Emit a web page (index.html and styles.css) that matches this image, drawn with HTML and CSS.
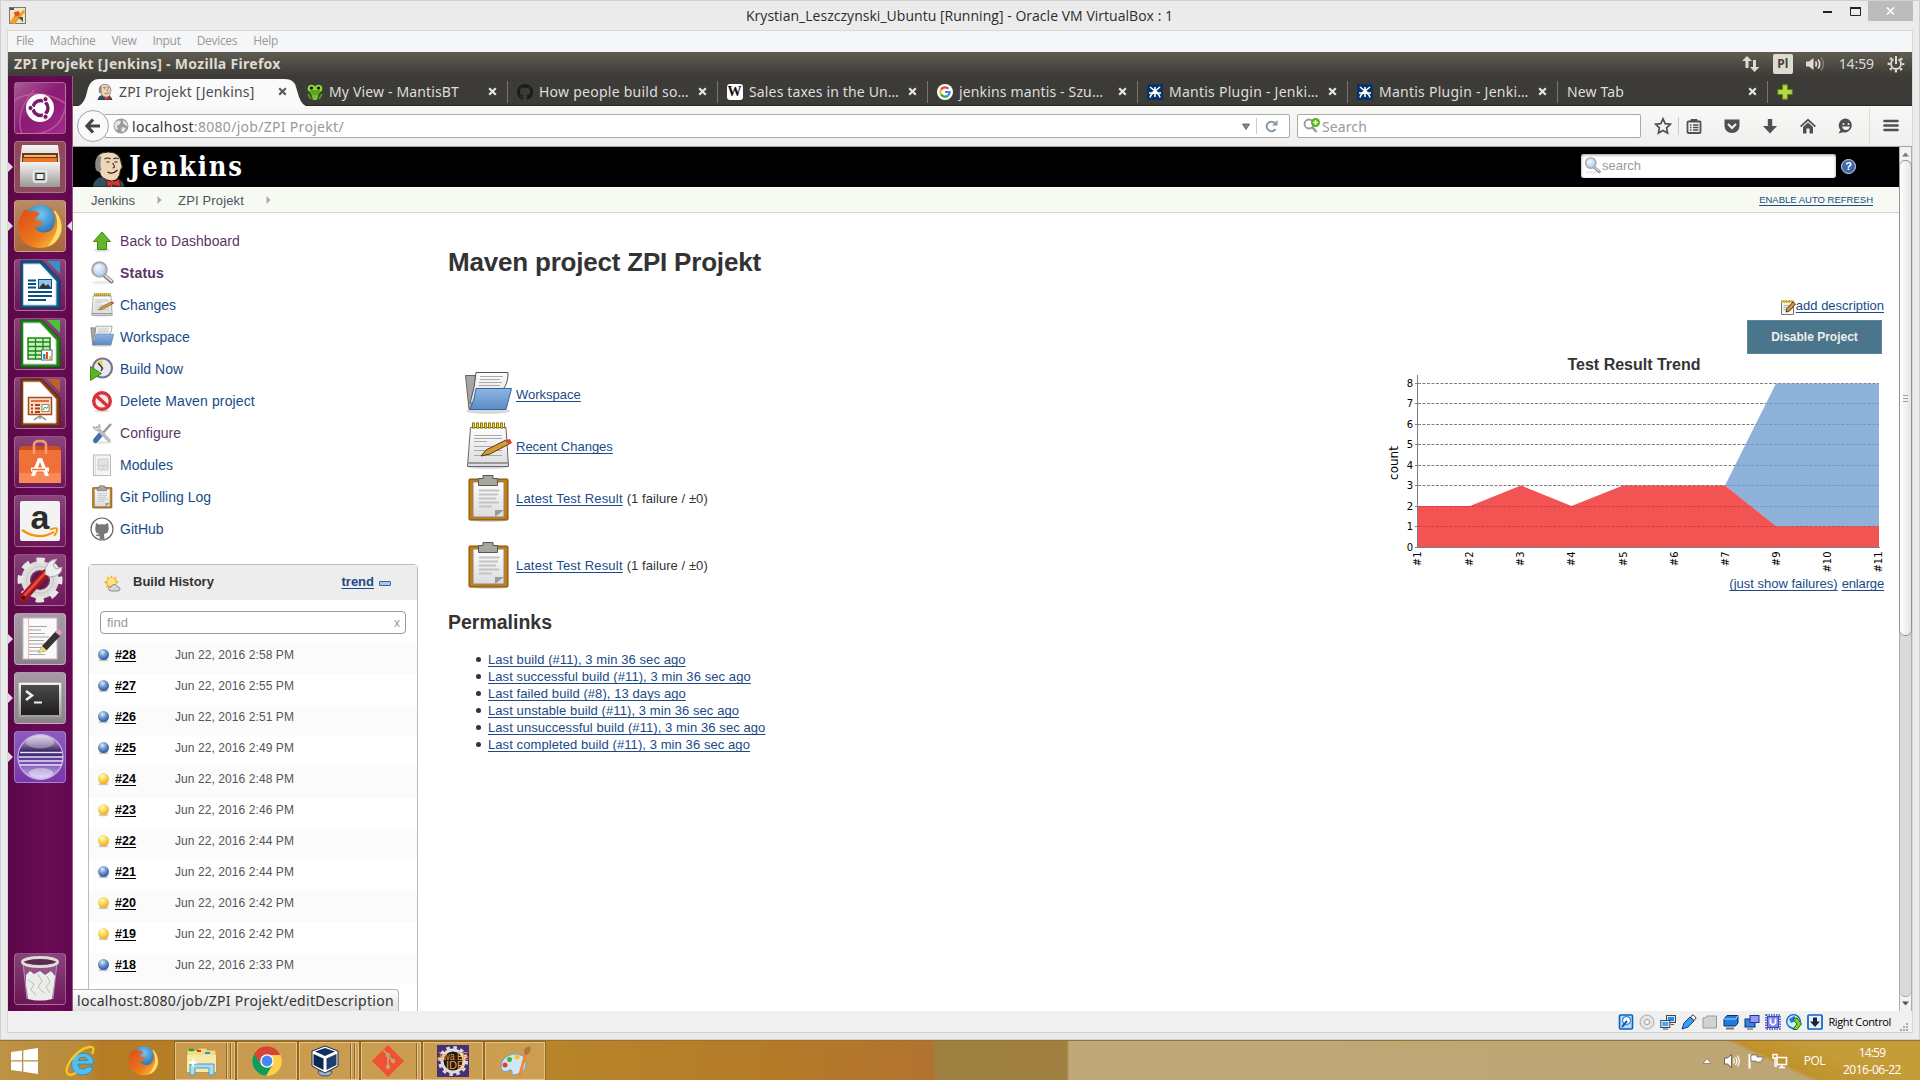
FILE: index.html
```html
<!DOCTYPE html>
<html lang="en">
<head>
<meta charset="utf-8">
<title>ZPI Projekt [Jenkins]</title>
<link rel="stylesheet" href="styles.css">
</head>
<body>
<svg class="defs" width="0" height="0">
  <defs>
    <linearGradient id="gPaper" x1="0" y1="0" x2="0" y2="1"><stop offset="0" stop-color="#fdfdfd"/><stop offset="1" stop-color="#dcdcdc"/></linearGradient>
    <linearGradient id="gSteel" x1="0" y1="0" x2="0" y2="1"><stop offset="0" stop-color="#f4f4f2"/><stop offset="1" stop-color="#9a9a98"/></linearGradient>
    <linearGradient id="gBlue" x1="0" y1="0" x2="0" y2="1"><stop offset="0" stop-color="#8fb5e0"/><stop offset="1" stop-color="#5a8cc8"/></linearGradient>
    <linearGradient id="gDark" x1="0" y1="0" x2="0" y2="1"><stop offset="0" stop-color="#4c4c4c"/><stop offset="1" stop-color="#1d1d1d"/></linearGradient>
    <linearGradient id="gFox" x1="0" y1="0" x2="1" y2="1"><stop offset="0" stop-color="#d9471c"/><stop offset=".6" stop-color="#ee7a1c"/><stop offset="1" stop-color="#fcd34a"/></linearGradient>
    <radialGradient id="gBallB" cx=".4" cy=".3" r=".75"><stop offset="0" stop-color="#e3eefa"/><stop offset=".45" stop-color="#6c98cd"/><stop offset="1" stop-color="#1f4f92"/></radialGradient>
    <radialGradient id="gBallY" cx=".4" cy=".3" r=".75"><stop offset="0" stop-color="#fffbd0"/><stop offset=".5" stop-color="#fbd74a"/><stop offset="1" stop-color="#f0a020"/></radialGradient>
    <linearGradient id="gEcl" x1="0" y1="0" x2="0" y2="1"><stop offset="0" stop-color="#d9cdea"/><stop offset=".2" stop-color="#8d78ad"/><stop offset=".38" stop-color="#33205c"/><stop offset=".6" stop-color="#6a47a4"/><stop offset="1" stop-color="#d6c2f3"/></linearGradient>
    <radialGradient id="gGlobe" cx=".5" cy=".25" r=".8"><stop offset="0" stop-color="#6fc7f2"/><stop offset="1" stop-color="#0b3f84"/></radialGradient>
    <radialGradient id="gLens" cx=".4" cy=".35" r=".7"><stop offset="0" stop-color="#f2f8ff"/><stop offset="1" stop-color="#a7c6ea"/></radialGradient>
    <symbol id="butler" viewBox="0 0 32 36">
      <path d="M0 36Q1 28 8 26L24 27Q31 29 32 36Z" fill="#335061" stroke="#111" stroke-width=".8"/>
      <path d="M11 26L19 36L23 27Z" fill="#fff"/>
      <path d="M3 14Q2 1 16 1Q28 1 29 13Q31 16 28 19Q27 30 19 30Q9 29 7 21Q2 20 3 14Z" fill="#f0d6b7" stroke="#222" stroke-width="1"/>
      <path d="M4 19Q1 12 5 6Q7 4 9 6Q7 12 9 19L7 21Z" fill="#8a8a84"/>
      <path d="M12 8Q15 6 18 8M21 8Q24 6 26 8M14 11h3M22 11h3M20 12Q24 17 20 17M15 21Q20 24 25 19" fill="none" stroke="#222" stroke-width="1.1"/>
      <path d="M14 29L20 31L27 28L28 36L21 34L15 36Z" fill="#d33833" stroke="#400" stroke-width=".6"/>
    </symbol>
    <symbol id="octo" viewBox="0 0 16 16"><path fill-rule="evenodd" d="M8 0C3.58 0 0 3.58 0 8c0 3.54 2.29 6.53 5.47 7.59.4.07.55-.17.55-.38 0-.19-.01-.82-.01-1.49-2.01.37-2.53-.49-2.69-.94-.09-.23-.48-.94-.82-1.13-.28-.15-.68-.52-.01-.53.63-.01 1.08.58 1.23.82.72 1.21 1.87.87 2.33.66.07-.52.28-.87.51-1.07-1.78-.2-3.64-.89-3.64-3.95 0-.87.31-1.59.82-2.15-.08-.2-.36-1.02.08-2.12 0 0 .67-.21 2.2.82.64-.18 1.32-.27 2-.27s1.36.09 2 .27c1.53-1.04 2.2-.82 2.2-.82.44 1.1.16 1.92.08 2.12.51.56.82 1.27.82 2.15 0 3.07-1.87 3.75-3.65 3.95.29.25.54.73.54 1.48 0 1.07-.01 1.93-.01 2.2 0 .21.15.46.55.38A8.01 8.01 0 0 0 16 8c0-4.42-3.58-8-8-8z"/></symbol>
    <symbol id="mantisplug" viewBox="0 0 16 16"><rect width="16" height="16" fill="#063467"/><g stroke="#fff" fill="none" stroke-width="1.6"><path d="M3 3L8 7L13 3M8 3V13M2 9H5L8 7L11 9H14M3 13.5Q4 9 8 9Q12 9 13 13.5"/></g></symbol>
    <symbol id="tabx" viewBox="0 0 9 9"><path d="M1.2 1.2L7.8 7.8M7.8 1.2L1.2 7.8" stroke="currentColor" stroke-width="2.2"/></symbol>
    <symbol id="magnify" viewBox="0 0 24 24"><ellipse cx="12" cy="21.5" rx="10" ry="1.8" fill="#000" opacity=".08"/><path d="M14.5 14.5L21.5 20.5" stroke="#777" stroke-width="4" stroke-linecap="round"/><path d="M15 14.5L21.5 20" stroke="#ddd" stroke-width="2" stroke-linecap="round"/><circle cx="9.5" cy="8.5" r="7.3" fill="url(#gLens)" stroke="#a5a8a8" stroke-width="2"/></symbol>
    <symbol id="folder" viewBox="0 0 48 48"><ellipse cx="24" cy="41" rx="22" ry="3" fill="#000" opacity=".15"/><path d="M1.500 5.500H11L14 39L5 39.500Z" fill="#a6a6a6" stroke="#666"/><path d="M12 2.500H44Q44 13 40 18L36 34L6 33Q11 17 12 2.500Z" fill="url(#gPaper)" stroke="#555"/><path d="M16 6.500H39M16 9.500H36M15 12.500H38M15 15.500H36" stroke="#aaa"/><path d="M12 18.500H47.500Q45 28 42 39.500H6Q11 29 12 18.500Z" fill="url(#gBlue)" stroke="#3465a4"/></symbol>
    <symbol id="notepad" viewBox="0 0 48 48"><ellipse cx="24" cy="45" rx="20" ry="2" fill="#000" opacity=".15"/><path d="M6.500 5.500H42L44.500 44.500H3.500Z" fill="url(#gPaper)" stroke="#666"/><path d="M4 41H44" stroke="#999" stroke-width="2"/><path d="M8 3.500H41" stroke="#8a7500" stroke-width="6" stroke-dasharray="3 1"/><path d="M9 3.500H41" stroke="#f0dc50" stroke-width="4" stroke-dasharray="1.200 2.800"/><path d="M10 13.500H38M10 16.500H38M10 19.500H23M10 24.500H37M10 28.500H38M10 33.500H38" stroke="#aaa"/><path d="M17 34L22 28L42 18L45 22L26 32Z" fill="#d39a3a" stroke="#5b3c08"/><path d="M42 18L46 17L48 21L45 22.500Z" fill="#e23b3b"/></symbol>
    <symbol id="clip" viewBox="0 0 48 48"><ellipse cx="25" cy="46" rx="18" ry="2" fill="#000" opacity=".15"/><rect x="5" y="5" width="39" height="41" rx="1" fill="#c17d11" stroke="#7c4d07"/><path d="M9 8H40V43H9Z" fill="url(#gPaper)" stroke="#888"/><path d="M15 16.500H35.500M15 20.500H34M15 24.500H32M15 28.500H35M15 32.500H28" stroke="#c3c3c3" stroke-width="1.800"/><path d="M31 43V36H40Z" fill="#9a9a9a"/><path d="M19 1.500H29V4.500H33.500V11.500H14.500V4.500H19Z" fill="#a5a79c" stroke="#555"/></symbol>
    <symbol id="ff" viewBox="0 0 48 48"><circle cx="25" cy="22" r="20" fill="url(#gGlobe)"/><path d="M5 12Q8 4 13 9Q20 7 24 12Q19 14 19 18Q28 18 26 22Q22 26 18 25Q23 33 33 30Q40 27 40 16Q38 8 33 4Q46 10 47 25Q45 46 24 47Q3 46 1 26Q1 17 5 12Z" fill="url(#gFox)"/><path d="M40 8Q48 18 46 30Q42 42 32 45Q42 34 42 22Q42 14 38 8Z" fill="#fde06a"/></symbol>
    <symbol id="gear" viewBox="-24 -24 48 48"><circle r="15" fill="none" stroke="#dcdcda" stroke-width="9"/><circle r="20.500" fill="none" stroke="#e6e6e4" stroke-width="6" stroke-dasharray="8.500 7.600" stroke-dashoffset="4.250"/><circle r="14" fill="none" stroke="#c4c4c2" stroke-width="1"/><circle r="9" fill="#5c1a4c"/></symbol>
    <symbol id="ballB" viewBox="0 0 14 14"><ellipse cx="7" cy="12.500" rx="5.500" ry="1.300" fill="#000" opacity=".2"/><circle cx="7" cy="6.500" r="5.900" fill="url(#gBallB)"/></symbol>
    <symbol id="ballY" viewBox="0 0 14 14"><ellipse cx="7" cy="12.500" rx="5.500" ry="1.300" fill="#000" opacity=".2"/><circle cx="7" cy="6.500" r="5.900" fill="url(#gBallY)"/></symbol>
  </defs>
</svg>

<div class="window">
  <header class="titlebar">
    <svg class="vm-icon" viewBox="0 0 17 17"><rect x=".5" y=".5" width="16" height="16" fill="#f6e4c0" stroke="#777"/><path d="M0 16L5 9L9 8L14 3L17 4L10 12L6 17Z" fill="#f0a030"/><path d="M1 1h4v2h-4zM9 10l5 0v5z" fill="#555"/><path d="M5 5l5-1 1 4-5 2z" fill="#e5501e"/></svg>
    <span class="wtitle">Krystian_Leszczynski_Ubuntu [Running] - Oracle VM VirtualBox : 1</span>
    <div class="wbtns">
      <svg width="9" height="3"><rect width="9" height="2" y="1" fill="#222"/></svg>
      <svg width="11" height="9"><path d="M.5 1H10.500V8.500H.5Z" fill="none" stroke="#222"/><path d="M0 1H11" stroke="#222" stroke-width="2"/></svg>
      <span class="wclose"><svg width="9" height="8"><path d="M1 .5L8 7.500M8 .5L1 7.500" stroke="#fff" stroke-width="1.500"/></svg></span>
    </div>
  </header>
  <div class="client">
    <nav class="menubar"><span>File</span><span>Machine</span><span>View</span><span>Input</span><span>Devices</span><span>Help</span></nav>

    <div class="guest">
      <div class="panel">
        <span class="ptitle">ZPI Projekt [Jenkins] - Mozilla Firefox</span>
        <div class="indicators">
          <svg width="18" height="18" fill="#dfdbd2"><path d="M5 1L10 6H6.500V13H3.500V6H0ZM12.500 17L17.500 12H14V5H11V12H8Z"/></svg>
          <span class="kbd">Pl</span>
          <svg width="20" height="16" fill="none" stroke="#dfdbd2"><path d="M0 5.500H3L7.500 2V14L3 10.500H0Z" fill="#dfdbd2" stroke="none"/><path d="M9.500 5.500Q11.500 8 9.500 10.500M12 3.500Q15.500 8 12 12.500" stroke-width="1.700"/><path d="M15 1.500Q20 8 15 14.500" stroke="#858178" stroke-width="1.500"/></svg>
          <span class="clock">14:59</span>
          <svg width="18" height="18" viewBox="-9 -9 18 18"><circle r="5" fill="none" stroke="#dfdbd2" stroke-width="1.800"/><circle r="7.200" fill="none" stroke="#dfdbd2" stroke-width="2.400" stroke-dasharray="2.400 3.250" stroke-dashoffset="1.200"/><path d="M0 -9V1" stroke="#4b4943" stroke-width="4.500"/><path d="M0 -8V0" stroke="#dfdbd2" stroke-width="2"/></svg>
        </div>
      </div>

      <div class="desk">
        <aside class="launcher">
          <div class="tile t-dash"><svg viewBox="0 0 52 52"><path d="M0 18Q26 4 52 22M8 52Q0 30 20 8M22 52Q50 48 52 20" stroke="#d06bb4" stroke-width="1.500" fill="none" opacity=".6"/><circle cx="26" cy="26" r="14" fill="#fff"/><circle cx="26.500" cy="26" r="7.500" fill="none" stroke="#7c1a63" stroke-width="3.400"/><path d="M26.500 26L14 26M26.500 26L33 15M26.500 26L33 37" stroke="#fff" stroke-width="2"/><g fill="#7c1a63" stroke="#fff" stroke-width="1"><circle cx="16.500" cy="26" r="2.600"/><circle cx="31.500" cy="17.200" r="2.600"/><circle cx="31.500" cy="34.800" r="2.600"/></g></svg></div>
          <div class="tile t-files run"><svg viewBox="0 0 52 52"><path d="M8 4H44L46 20V46H6V20Z" fill="url(#gSteel)"/><path d="M8 12H44V22H8Z" fill="#6b3a16"/><path d="M10 14H42V16H10Z" fill="#fbb36b"/><path d="M9 17H43V22H9Z" fill="#ee7423"/><path d="M6 21H46V46H6Z" fill="url(#gSteel)"/><rect x="19.500" y="30" width="13" height="11" rx="2" fill="#bbb" stroke="#eee" stroke-width="1.500"/><rect x="22" y="32.500" width="8" height="6" fill="#eee" stroke="#222"/></svg></div>
          <div class="tile t-ff run focus"><svg viewBox="0 0 52 52"><use href="#ff" x="3" y="3" width="46" height="46"/></svg></div>
          <div class="tile"><svg viewBox="0 0 52 52"><path d="M7 2H28L46 21V49H7Z" fill="#0d5a8c" stroke="#07395c"/><path d="M33 2H46V15Z" fill="#3b8fc4"/><path d="M9.500 5H26L42 22V46H9.500Z" fill="#fff" stroke="#ccc"/><path d="M14 21.500H22M14 25H22M14 28.500H22M14 33H38M14 37H38M14 41H32" stroke="#0d4f7e" stroke-width="2"/><rect x="24.500" y="20.500" width="13" height="9" fill="#8cc8ec" stroke="#0d4f7e"/><path d="M25 29L29 24L32 27L34 25L37 29Z" fill="#333"/></svg></div>
          <div class="tile"><svg viewBox="0 0 52 52"><path d="M7 2H28L46 21V49H7Z" fill="#1a8a12" stroke="#0c5a08"/><path d="M33 2H46V15Z" fill="#4cc141"/><path d="M9.500 5H26L42 22V46H9.500Z" fill="#fff" stroke="#ccc"/><path d="M14 20H36V41H14Z" fill="#c9f2c2" stroke="#1a8a12" stroke-width="1.500"/><path d="M14 24H36M14 28.500H36M14 33H36M14 37H36M21.500 20V41M29 20V41" stroke="#1a8a12" stroke-width="1.300"/><rect x="27.500" y="32" width="10.500" height="10" fill="#fff" stroke="#666"/><path d="M29 41V36h2.500v5" fill="#2c8fe0"/><path d="M32 41V34h2v7" fill="#e2561d"/><path d="M35 41v-3h2v3" fill="#f2b72a"/></svg></div>
          <div class="tile"><svg viewBox="0 0 52 52"><path d="M7 2H28L46 21V49H7Z" fill="#8a3a0e" stroke="#552106"/><path d="M33 2H46V15Z" fill="#b9622d"/><path d="M9.500 5H26L42 22V46H9.500Z" fill="#fff" stroke="#ccc"/><rect x="14.500" y="20.500" width="23" height="17" fill="#fbdcc6" stroke="#a8481a" stroke-width="1.500"/><path d="M17 24H35" stroke="#e2703a" stroke-width="2"/><path d="M17 28H19M21 28H26M17 31.500H19M21 31.500H26M17 35H19M21 35H26" stroke="#a8481a" stroke-width="1.800"/><rect x="28" y="27.500" width="7" height="7" fill="#fff" stroke="#888"/><path d="M29 33l2-3 1.500 1.500 2-2.500" stroke="#2aa22a" fill="none"/><path d="M26 38V42M26 38.500L20 43M26 38.500L32 43" stroke="#888" stroke-width="1.500"/></svg></div>
          <div class="tile"><svg viewBox="0 0 52 52"><path d="M7 10H45L47 14H5Z" fill="#c9501c"/><path d="M5 14H47V47H5Z" fill="#f07137"/><path d="M5 37H47V47H5Z" fill="#f78a55"/><path d="M20 18V9Q20 5 26 5Q32 5 32 9V18" fill="none" stroke="#f49c72" stroke-width="2.500"/><path d="M17 40L24 22H28L35 40H31L26 26L21 40Z" fill="#fff"/><path d="M17 33.500H35" stroke="#fff" stroke-width="4"/><path d="M18 33.500H31" stroke="#f07137" stroke-width="1.500"/></svg></div>
          <div class="tile"><svg viewBox="0 0 52 52"><rect x="6" y="6" width="40" height="40" rx="2" fill="#f3f3f3"/><text x="16.500" y="33.500" class="amz">a</text><path d="M8 35Q24 46 40 37" fill="none" stroke="#f79400" stroke-width="2.200"/><path d="M36 34.500Q43 32 43 34Q43 38 40 41" fill="none" stroke="#f79400" stroke-width="1.700"/></svg></div>
          <div class="tile"><svg viewBox="0 0 52 52"><use href="#gear" x="3" y="3" width="46" height="46"/><path d="M9 44L32 19" stroke="#a31318" stroke-width="8" stroke-linecap="round"/><path d="M10 42L32 18" stroke="#e04a4a" stroke-width="3" stroke-linecap="round"/><circle cx="9.500" cy="43.500" r="2" fill="#5b0a0a"/><path d="M31 20Q31 6 43 5L39 11L42 15L48 13Q48 22 36 23Z" fill="#eee" stroke="#aaa"/></svg></div>
          <div class="tile t-gray run"><svg viewBox="0 0 52 52"><rect x="9" y="5" width="34" height="41" fill="#fafafa" stroke="#bbb"/><path d="M14.500 5V46" stroke="#f2a0a0" stroke-width=".8"/><path d="M15 13.500H33M15 17H27M15 20.500H31M15 24H35M15 27.500H30M15 31H31M15 34.500H29M15 38H27M15 41.500H31" stroke="#9a9a9a" stroke-width=".9"/><path d="M24 40L28 33L42 18L47 22L32 38Z" fill="#333"/><path d="M24 40L28 33L33 37.500Z" fill="#f2dc6a"/><path d="M41 19L44 16Q48 17 48 20L46 23Z" fill="#e89ac4"/></svg></div>
          <div class="tile t-gray run"><svg viewBox="0 0 52 52"><rect x="4" y="10" width="44" height="36" rx="1" fill="url(#gSteel)" stroke="#888"/><rect x="7" y="13" width="38" height="30" fill="url(#gDark)"/><path d="M12 19L18 23.500L12 28" fill="none" stroke="#eee" stroke-width="2.500"/><path d="M20 30.500H28" stroke="#eee" stroke-width="2"/></svg></div>
          <div class="tile t-ecl run"><svg viewBox="0 0 52 52"><circle cx="26.500" cy="26" r="22.500" fill="url(#gEcl)" stroke="#cbb5ea" stroke-width="1.200"/><path d="M6 21.500H48M5 26H49M5 30H49M6 34H48" stroke="#e9defa" stroke-width="1.600"/><ellipse cx="26" cy="11" rx="14" ry="6.500" fill="#fff" opacity=".3"/><ellipse cx="27" cy="42" rx="12" ry="5" fill="#fff" opacity=".4"/></svg></div>
          <div class="tile trash"><svg viewBox="0 0 52 52"><path d="M9 10L13 46Q26 50 39 46L43 10Z" fill="#fff" opacity=".14"/><path d="M9 10L13 46M43 10L39 46" stroke="#d9c8d6" opacity=".6"/><path d="M12 22L16 18L20 21L26 18L31 22L37 18L41 23L40 32L38 46Q26 49 14 46L12 32Z" fill="#ececea"/><path d="M14 27L20 31L17 37L22 42M24 21L28 28L24 34L30 40M33 23L36 29L32 34L36 40" stroke="#bbb" fill="none"/><ellipse cx="26" cy="9" rx="17.500" ry="4.500" fill="#5a2b50" stroke="#dcdcda" stroke-width="3"/></svg></div>
        </aside>

        <section class="browser">
          <div class="tabs">
            <div class="tab active">
              <svg class="curve" width="234" height="28" viewBox="0 0 234 28"><path d="M0 28Q8 27 11 17L13 9Q16 0 24 0H210Q219 0 221 8L224 18Q227 27 234 28Z" fill="#fafafa"/></svg>
              <svg class="fav"><use href="#butler"/></svg><span>ZPI Projekt [Jenkins]</span><svg class="x"><use href="#tabx"/></svg></div>
            <div class="tab first"><svg class="fav" viewBox="0 0 16 16"><path d="M4 9Q8 12 12 9L10 16H6Z" fill="#7ac234"/><circle cx="4.500" cy="4.500" r="3.800" fill="#8fd43a"/><circle cx="11.500" cy="4.500" r="3.800" fill="#8fd43a"/><path d="M3 9Q8 14 13 9V6H3Z" fill="#5fa81e"/><circle cx="4.500" cy="4" r="1.600" fill="#111"/><circle cx="11.500" cy="4" r="1.600" fill="#111"/><path d="M1 10L4 15M15 10L12 15" stroke="#4c9a14" stroke-width="2"/></svg><span>My View - MantisBT</span><svg class="x"><use href="#tabx"/></svg></div>
            <div class="tab wide"><svg class="fav" fill="#1b1b1a"><use href="#octo"/></svg><span>How people build so…</span><svg class="x"><use href="#tabx"/></svg></div>
            <div class="tab"><span class="fav wiki">W</span><span>Sales taxes in the Un…</span><svg class="x"><use href="#tabx"/></svg></div>
            <div class="tab"><svg class="fav" viewBox="0 0 16 16"><circle cx="8" cy="8" r="8" fill="#fff"/><g fill="none" stroke-width="2.200"><path d="M11.500 4.800A4.700 4.700 0 0 0 4 5.600" stroke="#ea4335"/><path d="M4 5.600A4.700 4.700 0 0 0 4 10.400" stroke="#fbbc05"/><path d="M4 10.400A4.700 4.700 0 0 0 11 11.600" stroke="#34a853"/><path d="M11 11.600A4.700 4.700 0 0 0 12.700 8H8" stroke="#4285f4"/></g></svg><span>jenkins mantis - Szu…</span><svg class="x"><use href="#tabx"/></svg></div>
            <div class="tab wide"><svg class="fav"><use href="#mantisplug"/></svg><span>Mantis Plugin - Jenki…</span><svg class="x"><use href="#tabx"/></svg></div>
            <div class="tab wide"><svg class="fav"><use href="#mantisplug"/></svg><span>Mantis Plugin - Jenki…</span><svg class="x"><use href="#tabx"/></svg></div>
            <div class="tab"><span>New Tab</span><svg class="x"><use href="#tabx"/></svg></div>
            <div class="newtab"><svg width="16" height="16"><path d="M5.500 .8H10.500V5.500H15.200V10.500H10.500V15.200H5.500V10.500H.8V5.500H5.500Z" fill="#b4d943" stroke="#5e8a12"/></svg></div>
          </div>

          <div class="navbar">
            <span class="back"><svg width="16" height="16"><path d="M8 1.500L2 8L8 14.500M2.500 8H15" fill="none" stroke="#444" stroke-width="3.200"/></svg></span>
            <div class="urlbar">
              <svg width="16" height="16" viewBox="0 0 16 16"><circle cx="8" cy="8" r="7.500" fill="#9a9a9a"/><path d="M2 5Q5 1.500 8 3L7 6L4 8L5 11L3 12Q.5 9 2 5ZM10 2Q14 4 15 8L12 7L10 5ZM9 9L13 10L11 14L8 13Z" fill="#e4e4e4"/></svg>
              <span class="url"><b>localhost</b>:8080/job/ZPI Projekt/</span>
              <svg class="dd" width="8" height="7"><path d="M.5 1H7.500L4 6.500Z" fill="#888" stroke="#555" stroke-width=".8"/></svg>
              <i></i>
              <svg class="reload" width="13" height="13" viewBox="0 0 13 13"><path d="M10.500 9A4.800 4.800 0 1 1 9.800 3" fill="none" stroke="#8996a1" stroke-width="2"/><path d="M7 5.500H12.500V0Z" fill="#8996a1"/></svg>
            </div>
            <div class="searchbar">
              <svg width="17" height="16" viewBox="0 0 17 16"><circle cx="6" cy="6" r="4.500" fill="none" stroke="#999" stroke-width="1.800"/><path d="M9 9L13.500 14" stroke="#999" stroke-width="2.600"/><circle cx="12.500" cy="4.500" r="4.500" fill="#54b71b"/><path d="M12.500 2V7M10 4.500H15" stroke="#fff" stroke-width="1.400"/></svg>
              <span>Search</span>
            </div>
            <div class="tools">
              <svg viewBox="0 0 18 18"><path d="M9 1.800L11.200 6.600L16.400 7.200L12.600 10.800L13.600 16L9 13.400L4.400 16L5.400 10.800L1.600 7.200L6.800 6.600Z" fill="none" stroke="#505050" stroke-width="1.700"/></svg>
              <i></i>
              <svg viewBox="0 0 18 18"><rect x="2.500" y="4.500" width="13" height="11.500" rx="1" fill="none" stroke="#505050" stroke-width="1.800"/><path d="M6 4V2.500H12V4" fill="#505050" stroke="#505050"/><path d="M5 8H6.500M8 8H13.500M5 10.500H6.500M8 10.500H13.500M5 13H6.500M8 13H13.500" stroke="#505050" stroke-width="1.300"/></svg>
              <svg viewBox="0 0 18 18"><path d="M1.500 2.500H16.500V9Q16 15.500 9 16Q2 15.500 1.500 9Z" fill="#505050"/><path d="M5 7L9 11L13 7" fill="none" stroke="#f4f4f4" stroke-width="2"/></svg>
              <svg viewBox="0 0 18 18"><path d="M6.800 2H11.200V9H16L9 16.500L2 9H6.800Z" fill="#505050"/></svg>
              <svg viewBox="0 0 18 18"><path d="M9 1.500L17 9L15.800 10.200L9 4L2.200 10.200L1 9Z" fill="#505050"/><path d="M4 10L9 5.500L14 10V16.500H10.500V11.500H7.500V16.500H4Z" fill="#505050"/></svg>
              <svg viewBox="0 0 18 18"><path d="M9 1.500A7.300 7 0 1 1 6 15.300L1.500 16.500L3.500 13A7.300 7 0 0 1 9 1.500Z" fill="#505050"/><circle cx="6.500" cy="7" r="1" fill="#f4f4f4"/><circle cx="11.500" cy="7" r="1" fill="#f4f4f4"/><path d="M5 9.500H13Q12 13 9 13Q6 13 5 9.500Z" fill="#f4f4f4"/></svg>
              <i class="tall"></i>
              <svg viewBox="0 0 18 18"><path d="M2.500 4H15.500M2.500 8.500H15.500M2.500 13H15.500" stroke="#505050" stroke-width="2.600" stroke-linecap="round"/></svg>
            </div>
          </div>

          <div class="viewport">
            <div class="page">
              <header class="jhead">
                <svg class="jface"><use href="#butler"/></svg><span class="jname">Jenkins</span>
                <div class="jsearch"><svg width="17" height="17"><use href="#magnify"/></svg><span>search</span></div>
                <span class="help">?</span>
              </header>
              <div class="crumbs"><span>Jenkins</span><svg width="5" height="8"><path d="M.5 0L4.500 4L.5 8Z" fill="#aaa"/></svg><span class="c2">ZPI Projekt</span><svg width="5" height="8"><path d="M.5 0L4.500 4L.5 8Z" fill="#aaa"/></svg><a class="refresh">ENABLE AUTO REFRESH</a></div>

              <div class="columns">
                <aside class="side">
                  <ul class="tasks">
                    <li class="v"><svg viewBox="0 0 24 24"><ellipse cx="12" cy="21" rx="8" ry="2" fill="#000" opacity=".12"/><path d="M12 3L20.500 12.500H16.500V20.500H7.500V12.500H3.500Z" fill="#62b82a" stroke="#3c8a0c"/></svg><span>Back to Dashboard</span></li>
                    <li class="v cur"><svg><use href="#magnify"/></svg><span>Status</span></li>
                    <li><svg><use href="#notepad"/></svg><span>Changes</span></li>
                    <li><svg><use href="#folder"/></svg><span>Workspace</span></li>
                    <li><svg viewBox="0 0 24 24"><circle cx="12.500" cy="11" r="9.500" fill="#e9e9ec" stroke="#75758f" stroke-width="2.200"/><path d="M12.500 11L7 4.500L12.500 3Z" fill="#e7cf5a"/><path d="M8 6L12.500 11L11 14" fill="none" stroke="#333" stroke-width="1.500"/><path d="M.5 9.500L11.500 16.500L.5 23.500Z" fill="#5cb424" stroke="#2c7a06" stroke-width=".8"/></svg><span>Build Now</span></li>
                    <li class="del"><svg viewBox="0 0 24 24"><ellipse cx="12" cy="22" rx="8" ry="1.500" fill="#000" opacity=".12"/><circle cx="12" cy="12" r="8.300" fill="#f7e9e9" stroke="#d8333a" stroke-width="3.400"/><path d="M6 6.500L18 17.500" stroke="#d8333a" stroke-width="3.400"/></svg><span>Delete Maven project</span></li>
                    <li class="v"><svg viewBox="0 0 24 24"><ellipse cx="12" cy="21.500" rx="10" ry="1.500" fill="#000" opacity=".1"/><path d="M21 3L12 13" stroke="#8f9aa8" stroke-width="2.500"/><path d="M11.500 12.500L5.500 19.500" stroke="#3f6fb0" stroke-width="5" stroke-linecap="round"/><path d="M7 7L19 19.500" stroke="#bdbdbd" stroke-width="3.600" stroke-linecap="round"/><path d="M3 5Q4 10 8.500 9.500Q11.500 7 9.500 3L7.500 6.500L4.500 6.500Z" fill="#d8d8d8" stroke="#999" stroke-width=".7"/></svg><span>Configure</span></li>
                    <li><svg viewBox="0 0 24 24"><rect x="3.500" y="2" width="17" height="20.500" fill="#f5f5f5" stroke="#bbb"/><path d="M8 6H18V17H8ZM8 12.500H18M13 12.500V17" fill="#e2e2e2" stroke="#ccc"/><path d="M5.500 2V22" stroke="#ddd"/></svg><span>Modules</span></li>
                    <li><svg><use href="#clip"/></svg><span>Git Polling Log</span></li>
                    <li><svg viewBox="0 0 24 24"><circle cx="12" cy="12" r="11" fill="#fff" stroke="#666" stroke-width="1.200"/><path d="M6 6L9 7.500Q12 7 15 7.500L18 6L18.500 9.500Q20 16 14 17L14.500 22Q12 23 9.500 22L9.800 19Q6 20 5.500 17Q8 18 9.500 17Q4 16 5.500 9.500Z" fill="#777"/></svg><span>GitHub</span></li>
                  </ul>
                  <div class="history">
                    <div class="hhead"><svg width="17" height="17" viewBox="0 0 17 17"><path d="M7.500 0L9 3L12.500 1.500L12 5L15 7L12 9L10 14L5 12L1.500 13L3 9.500L0 7L3.500 5L2.500 1.500L6 3Z" fill="#f8b62a"/><circle cx="7.500" cy="7" r="4" fill="#fde48a"/><path d="M7 16Q4.500 16 4.500 13.500Q5 11.500 7 12Q8 9 11 9.500Q13 10 13.500 12Q16 12 16 14Q16 16 14 16Z" fill="#d5d5d5" stroke="#777" stroke-width=".8"/></svg><b>Build History</b><a>trend</a><i></i></div>
                    <div class="find"><span>find</span><span class="fx">x</span></div>
                    <ul class="builds">
                      <li><svg><use href="#ballB"/></svg><a>#28</a><span>Jun 22, 2016 2:58 PM</span></li>
                      <li><svg><use href="#ballB"/></svg><a>#27</a><span>Jun 22, 2016 2:55 PM</span></li>
                      <li><svg><use href="#ballB"/></svg><a>#26</a><span>Jun 22, 2016 2:51 PM</span></li>
                      <li><svg><use href="#ballB"/></svg><a>#25</a><span>Jun 22, 2016 2:49 PM</span></li>
                      <li><svg><use href="#ballY"/></svg><a>#24</a><span>Jun 22, 2016 2:48 PM</span></li>
                      <li><svg><use href="#ballY"/></svg><a>#23</a><span>Jun 22, 2016 2:46 PM</span></li>
                      <li><svg><use href="#ballY"/></svg><a>#22</a><span>Jun 22, 2016 2:44 PM</span></li>
                      <li><svg><use href="#ballB"/></svg><a>#21</a><span>Jun 22, 2016 2:44 PM</span></li>
                      <li><svg><use href="#ballY"/></svg><a>#20</a><span>Jun 22, 2016 2:42 PM</span></li>
                      <li><svg><use href="#ballY"/></svg><a>#19</a><span>Jun 22, 2016 2:42 PM</span></li>
                      <li><svg><use href="#ballB"/></svg><a>#18</a><span>Jun 22, 2016 2:33 PM</span></li>
                      <li></li>
                    </ul>
                  </div>
                </aside>

                <main class="main">
                  <h1>Maven project ZPI Projekt</h1>
                  <div class="split">
                    <div class="left">
                      <div class="prow"><svg><use href="#folder"/></svg><a>Workspace</a></div>
                      <div class="prow"><svg><use href="#notepad"/></svg><a>Recent Changes</a></div>
                      <div class="prow test"><svg><use href="#clip"/></svg><a>Latest Test Result</a><span>(1 failure / ±0)</span></div>
                      <div class="prow test gap"><svg><use href="#clip"/></svg><a>Latest Test Result</a><span>(1 failure / ±0)</span></div>
                      <h2>Permalinks</h2>
                      <ul class="links">
                        <li><a>Last build (#11), 3 min 36 sec ago</a></li>
                        <li><a>Last successful build (#11), 3 min 36 sec ago</a></li>
                        <li><a>Last failed build (#8), 13 days ago</a></li>
                        <li><a>Last unstable build (#11), 3 min 36 sec ago</a></li>
                        <li><a>Last unsuccessful build (#11), 3 min 36 sec ago</a></li>
                        <li><a>Last completed build (#11), 3 min 36 sec ago</a></li>
                      </ul>
                    </div>
                    <div class="right">
                      <div class="adddesc"><svg width="16" height="16" viewBox="0 0 16 16"><path d="M1.500 2.500H13.500V15.500H1.500Z" fill="#f4f4f4" stroke="#777"/><path d="M1 2.500H14" stroke="#d8b52a" stroke-width="3" stroke-dasharray="1.800 .6"/><path d="M3.500 6.500H10M3.500 8.500H9M3.500 10.500H7" stroke="#aaa"/><path d="M6 13L7 9.500L13 3L15.500 5L9.500 12Z" fill="#d39a3a" stroke="#3f2a05" stroke-width=".9"/></svg><a>add description</a></div>
                      <button class="disable">Disable Project</button>
                      <div class="ctitle">Test Result Trend</div>
                      <svg class="chart" width="500" height="200" viewBox="0 0 500 200">
                        <g stroke="#808080" stroke-dasharray="3 1.500"><path d="M34 152.500H495M34 132.500H495M34 111.500H495M34 91.500H495M34 70.500H495M34 50.500H495M34 29.500H495M34 9.500H495"/></g>
                        <path d="M341 111.500L392 9.500H495V152.500H392Z" fill="#729fcf" fill-opacity=".8"/>
                        <path d="M33.500 173V132H86L137 111.500L187.500 132L239 111.500H341L392 152.300H495V173Z" fill="#ef2929" fill-opacity=".8"/>
                        <path d="M33.500 1V173.500M31 173.500H496M31 152.500H34M31 132.500H34M31 111.500H34M31 91.500H34M31 70.500H34M31 50.500H34M31 29.500H34M31 9.500H34" stroke="#808080" fill="none"/>
                        <g class="ylab"><text x="29" y="176.500">0</text><text x="29" y="156">1</text><text x="29" y="136">2</text><text x="29" y="115">3</text><text x="29" y="95">4</text><text x="29" y="74">5</text><text x="29" y="54">6</text><text x="29" y="33">7</text><text x="29" y="13">8</text></g>
                        <g class="xlab"><text transform="translate(37 177.500)rotate(-90)">#1</text><text transform="translate(89 177.500)rotate(-90)">#2</text><text transform="translate(140 177.500)rotate(-90)">#3</text><text transform="translate(191 177.500)rotate(-90)">#4</text><text transform="translate(242.500 177.500)rotate(-90)">#5</text><text transform="translate(293.500 177.500)rotate(-90)">#6</text><text transform="translate(344.500 177.500)rotate(-90)">#7</text><text transform="translate(396 177.500)rotate(-90)">#9</text><text transform="translate(447 177.500)rotate(-90)">#10</text><text transform="translate(498 177.500)rotate(-90)">#11</text></g>
                        <text class="count" transform="translate(14 89)rotate(-90)">count</text>
                      </svg>
                      <div class="clinks"><a>(just show failures)</a><a>enlarge</a></div>
                    </div>
                  </div>
                </main>
              </div>
              <div class="status">localhost:8080/job/ZPI Projekt/editDescription</div>
            </div>
            <div class="scroll">
              <svg class="up" width="7" height="5"><path d="M0 4.500L3.500 .5L7 4.500Z" fill="#777"/></svg>
              <div class="thumb"><i></i><i></i><i></i></div>
              <div class="rest"></div>
              <svg class="down" width="7" height="5"><path d="M0 .5L3.500 4.500L7 .5Z" fill="#555"/></svg>
            </div>
          </div>
        </section>
      </div>
    </div>

    <footer class="vbstatus">
      <svg viewBox="0 0 16 16"><rect x="1.500" y="1" width="13" height="14" rx="1" fill="#b8dcf8" stroke="#0a62c4" stroke-width="1.600"/><circle cx="8.500" cy="6.500" r="4" fill="#fff" stroke="#0a62c4"/><path d="M4 13L9 7" stroke="#0a62c4" stroke-width="2"/></svg>
      <svg viewBox="0 0 16 16"><circle cx="8" cy="8" r="7" fill="#e4e4e4" stroke="#aaa"/><circle cx="8" cy="8" r="2.500" fill="#fff" stroke="#999"/></svg>
      <svg viewBox="0 0 16 16"><rect x="6.500" y="1.500" width="9" height="7" fill="#2f86e6" stroke="#444"/><rect x="7.500" y="2.500" width="7" height="5" fill="none" stroke="#fff" stroke-width=".8"/><rect x=".8" y="6.500" width="9" height="7" fill="#49a4f5" stroke="#444"/><rect x="1.800" y="7.500" width="7" height="5" fill="none" stroke="#fff" stroke-width=".8"/><path d="M3 15H8M10.500 10.500H14" stroke="#555"/></svg>
      <svg viewBox="0 0 16 16"><path d="M1 15L3 9L9 3L13 7L7 13Z" fill="#3b9cf2" stroke="#0b3f84"/><path d="M9.500 3L12 .8L15.200 4L13 6.500Z" fill="#fff" stroke="#333"/></svg>
      <svg viewBox="0 0 16 16"><path d="M1 14V4H3L5 2H14.500V14Z" fill="#d2d2d2" stroke="#999"/></svg>
      <svg viewBox="0 0 16 16"><path d="M1 5L4 1.500H15V9L12.500 12H1Z" fill="#1f7be2" stroke="#0a2f66"/><path d="M1 5H12.500L15 1.500" stroke="#a8d4fb" fill="none"/><path d="M3 14.500H11" stroke="#777" stroke-width="2"/></svg>
      <svg viewBox="0 0 16 16"><rect x="1" y="5" width="10" height="8" fill="#2f86e6" stroke="#0a2f66"/><rect x="6" y="1.500" width="9" height="7" fill="#8f9bf5" stroke="#2a2f9c"/><path d="M3 15H9" stroke="#555"/></svg>
      <svg viewBox="0 0 16 16"><rect x="1" y="1" width="14" height="14" fill="none" stroke="#3c48b8" stroke-width="1.500" stroke-dasharray="1.500 1"/><rect x="2.500" y="2.500" width="11" height="11" fill="#7d88ea" stroke="#3c48b8"/><path d="M5.500 4.500V9Q8 12.500 10.500 9V4.500" fill="none" stroke="#fff" stroke-width="1.800"/></svg>
      <svg viewBox="0 0 16 16"><circle cx="7.500" cy="7.500" r="6.800" fill="#d5ecfb" stroke="#0a62c4" stroke-width="1.300"/><path d="M3 5L8 2L12 6L5 9Z" fill="#1f7be2"/><path d="M7 5L11 4L15.500 10L11 15.500H7L11 10Z" fill="#7bd52a" stroke="#2a6a06"/></svg>
      <svg viewBox="0 0 16 16"><rect x="1" y="1" width="14" height="14" rx="1" fill="#e8f3fd" stroke="#0a62c4" stroke-width="1.700"/><path d="M6 3.500H10V7.500H13L8 13L3 7.500H6Z" fill="#223"/></svg>
      <span class="rc">Right Control</span>
      <svg class="grip" width="9" height="9"><path d="M6 0h2v2h-2zM3 3h2v2h-2zM6 3h2v2h-2zM0 6h2v2h-2zM3 6h2v2h-2zM6 6h2v2h-2z" fill="#aaa"/></svg>
    </footer>
  </div>
</div>

<div class="taskbar">
  <div class="slot"><svg width="27" height="26" viewBox="0 0 27 26"><path d="M0 4L11 2.500V12.300H0ZM12.300 2.300L27 0V12.300H12.300ZM0 13.600H11V23.500L0 22ZM12.300 13.600H27V26L12.300 23.700Z" fill="#fff"/></svg></div>
  <div class="slot"><svg width="32" height="32" viewBox="0 0 32 32"><path d="M29 19H13Q13 24 18 24Q21 24 22 22H28Q26 30 17 30Q7 29 6.500 19Q7 9 17 8Q28 8 29 19ZM13 15.500H22.500Q22 12 18 12Q14 12 13 15.500Z" fill="#4fc0f0" stroke="#1e88c8" stroke-width=".8"/><path d="M27 9Q31 1 24 2Q14 4 6 15Q-1 26 3 29Q5 31 11 28" fill="none" stroke="#f8c820" stroke-width="2.300"/></svg></div>
  <div class="slot"><svg width="31" height="31"><use href="#ff"/></svg></div>
  <div class="slot task s2"><svg width="32" height="30" viewBox="0 0 32 30"><path d="M2 4H13V2H22V4H31V26H2Z" fill="#f2dc8a" stroke="#b59a3c"/><path d="M4 4H9" stroke="#1cae1c" stroke-width="2.500"/><path d="M12 5H16" stroke="#d33" stroke-width="2"/><path d="M20 7H25" stroke="#2f8fe0" stroke-width="2"/><path d="M2 9H31V26H2Z" fill="#f8e9a8"/><path d="M5 29V18H29V29H24V22H10V29Z" fill="#a9dbf2" stroke="#4b9cc4"/><path d="M8 11L9 15L13 17L9 18L8 22L7 18L3 17L7 15Z" fill="#fff"/></svg></div>
  <div class="slot task"><svg width="30" height="30" viewBox="-15 -15 30 30"><circle r="14.800" fill="#fcd04b"/><path d="M-12.800 -7.400A14.800 14.800 0 0 1 13.500 -6H0L-5 3.500Z" fill="#d84437"/><path d="M-12.800 -7.400A14.800 14.800 0 0 0 -1 14.800L5.500 4L-5 4Z" fill="#129b5a"/><path d="M-12.800 -7.400L-6 3L0 -6.500H13.500" fill="#d84437"/><circle r="6.800" fill="#fff"/><circle r="5.400" fill="#4688f1"/></svg></div>
  <div class="slot task s2"><svg width="28" height="32" viewBox="0 0 28 32"><path d="M7 26Q7 31 14 31Q21 31 21 26Z" fill="#9fb4cc" stroke="#456"/><path d="M1 6L14 1L27 6V21L14 28L1 21Z" fill="#fff" stroke="#1c2f4e"/><path d="M4 6.500L14 3L24 6.500L14 11Z" fill="#12305c"/><path d="M2.500 9L12.500 13.500V25L2.500 20Z" fill="#0f2850"/><path d="M25.500 9L15.500 13.500V25L25.500 20Z" fill="#1c3f70"/></svg></div>
  <div class="slot task s1"><svg width="32" height="32" viewBox="0 0 32 32"><path d="M16 0L32 16L16 32L0 16Z" fill="#f05133"/><path d="M11.500 5L16 10V22M16 11L21 16" stroke="#c9a26a" stroke-width="1.800" fill="none"/><g fill="#c9a26a"><circle cx="16" cy="10" r="2.300"/><circle cx="16" cy="22" r="2.300"/><circle cx="21" cy="16" r="2.300"/></g></svg></div>
  <div class="slot task"><svg width="32" height="32" viewBox="0 0 32 32"><rect width="32" height="32" fill="#463078"/><g transform="translate(16 16)"><circle r="11" fill="#1b1b1b" stroke="#ddd" stroke-width="3"/><circle r="13.500" fill="none" stroke="#ddd" stroke-width="3" stroke-dasharray="3.500 3.570"/></g><text class="jee" x="0" y="15" textLength="31" lengthAdjust="spacingAndGlyphs">Java EE</text><text class="jee" x="9" y="24">IDE</text></svg></div>
  <div class="slot task"><svg width="33" height="32" viewBox="0 0 33 32"><path d="M2 22Q2 12 14 9Q26 8 27 18Q27 28 15 30Q12 30 13 26Q12 23 9 26Q3 28 2 22Z" fill="#cfe6f7" stroke="#6aa4cf"/><circle cx="6" cy="20" r="2.500" fill="#e2402a"/><circle cx="10.500" cy="14.500" r="2.500" fill="#3cb43c"/><circle cx="18" cy="12" r="2.500" fill="#f2c52a"/><path d="M19 31L25 9L28 10L22 31Z" fill="#ee8a2a"/><path d="M25 9Q24 2 31 1Q33 6 28 10Z" fill="#b3743c"/></svg></div>
  <div class="tray">
    <svg width="8" height="6"><path d="M0 5.500L4 .5L8 5.500Z" fill="#fff" stroke="#654" stroke-width=".6"/></svg>
    <svg class="spk" width="16" height="16"><path d="M.5 5H3.500L7.500 1.500V14.500L3.500 11H.5Z" fill="#fff" stroke="#543" stroke-width=".8"/><path d="M9.500 5.500Q11 8 9.500 10.500M11.500 4Q14 8 11.500 12M13.500 2.500Q17 8 13.500 13.500" fill="none" stroke="#fff" stroke-width="1.200"/></svg>
    <svg class="flg" width="16" height="16"><path d="M1.500 1V15.500" stroke="#fff" stroke-width="2"/><path d="M3 2H9V4H15.500L13 9H8V8H3Z" fill="#fff" stroke="#543" stroke-width=".6"/></svg>
    <svg class="net" width="16" height="16"><path d="M5 4.500H14.500V11.500H5ZM7 14.500H13M10 12V14" fill="none" stroke="#fff" stroke-width="1.600"/><path d="M1 1.500H5V5H1ZM3 5V13H5" fill="none" stroke="#fff" stroke-width="1.400"/></svg>
    <span class="pol">POL</span>
    <div class="time"><span class="hm">14:59</span><span>2016-06-22</span></div>
  </div>
</div>
</body>
</html>
```
FILE: styles.css
```css
* { box-sizing: border-box; }
body { margin: 0; width: 1920px; height: 1080px; overflow: hidden; display: flex; flex-direction: column; font-family: "Liberation Sans", Arial, sans-serif; font-size: 13px; color: #333; }
.defs { position: absolute; }
ul, h1, h2 { margin: 0; padding: 0; list-style: none; }
svg { display: block; flex: none; }
span, a, b { white-space: nowrap; }
a { color: #204a87; text-decoration: underline; text-decoration-skip-ink: none; text-underline-offset: 2px; }

/* host window */
.window { height: 1040px; background: #ebebeb; border: 1px solid #d0d0d0; padding: 0 6px; display: flex; flex-direction: column; flex: none; }
.titlebar { height: 29px; display: flex; align-items: center; flex: none; font: 14px "Open Sans", "Noto Sans", sans-serif; color: #2b2b2b; padding: 0 0 1px 2px; }
.vm-icon { width: 17px; height: 17px; }
.wtitle { margin-left: 720px; letter-spacing: .03px; }
.wbtns { margin-left: auto; display: flex; align-self: flex-start; height: 20px; align-items: center; }
.wbtns > svg + svg { margin: 0 7px 0 18px; }
.wclose { width: 45px; height: 20px; background: #bcbcbc; display: flex; align-items: center; justify-content: center; }
.client { flex: 1; border: 1px solid #d9d9d9; border-bottom-color: #d0d0d0; margin-bottom: 6px; display: flex; flex-direction: column; min-height: 0; }
.menubar { height: 21px; flex: none; background: #f5f6f7; display: flex; gap: 16px; padding-left: 8px; font: 12px/20px "Open Sans", "Noto Sans", sans-serif; letter-spacing: -.3px; color: #999; }
.guest { height: 959px; flex: none; display: flex; flex-direction: column; }
.panel { height: 24px; flex: none; background: linear-gradient(#5f5d53, #3c3b37); display: flex; align-items: center; font: 14px/24px "Noto Sans", "Open Sans", sans-serif; color: #dfdbd2; padding: 0 7px 0 6px; }
.ptitle { font-weight: bold; letter-spacing: .3px; }
.clock { letter-spacing: -.1px; }
.indicators { margin-left: auto; display: flex; align-items: center; gap: 13px; }
.kbd { width: 20px; height: 20px; border-radius: 2px; background: #dfdbd2; color: #45443f; font: bold 12px/20px "Noto Sans", sans-serif; text-align: center; }
.desk { flex: 1; display: flex; min-height: 0; }

/* launcher */
.launcher { width: 65px; flex: none; background: linear-gradient(90deg, #5c0748, #6a0b55 60%, #620850); border-right: 1px solid #9a5a88; padding: 6px 0 6px 6px; display: flex; flex-direction: column; gap: 7px; }
.tile { width: 52px; height: 52px; border-radius: 4px; border: 1px solid rgba(255,255,255,.25); background: linear-gradient(rgba(255,255,255,.24), rgba(255,255,255,.06)); position: relative; flex: none; }
.tile svg { width: 52px; height: 52px; margin: -1px; }
.t-dash { background: linear-gradient(135deg, #a85a92, #8a1a72 50%, #a22c8c); }
.t-files { background: #8e4a5c; }
.t-ff { background: linear-gradient(#b98a63, #a9673a); }
.t-gray { background: linear-gradient(#a89aa6, #8f7f8d); }
.t-ecl { background: linear-gradient(#8a5cc0, #7a37a8); }
.trash { margin-top: auto; }
.run::before { content: ""; position: absolute; left: -7px; top: 20px; border: 5px solid transparent; border-left-color: #ddd; border-right: 0; }
.focus::after { content: ""; position: absolute; right: -7px; top: 20px; border: 5px solid transparent; border-right-color: #ddd; border-left: 0; }
.amz { font: bold 34px "Liberation Sans", sans-serif; fill: #2b2b2b; }

/* browser chrome */
.browser { flex: 1; display: flex; flex-direction: column; min-width: 0; }
.tabs { height: 30px; flex: none; background: #3c3b37; border-bottom: 1px solid #2a2926; display: flex; align-items: center; padding: 2px 0 0 14px; font: 14px/24px "Noto Sans", "Open Sans", sans-serif; letter-spacing: .15px; color: #dedede; }
.tab { width: 210px; height: 22px; flex: none; display: flex; align-items: center; padding: 0 10px 0 9px; border-left: 1px solid #77756e; position: relative; }
.tab.wide { letter-spacing: .25px; }
.tab.active { color: #4c4c4c; border: 0; padding-left: 10px; }
.tab.active > *:not(.curve) { position: relative; }
.tab.first { border: 0; padding-left: 10px; }
.curve { position: absolute; left: -12px; top: -2px; }
.fav { width: 16px; height: 16px; margin-right: 6px; flex: none; }
.wiki { background: #fff; border-radius: 3px; color: #111; font: bold 14px/16px "Liberation Serif", serif; text-align: center; text-indent: -1px; overflow: hidden; letter-spacing: 0; }
.x { width: 9px; height: 9px; margin-left: auto; color: #e6e6e6; }
.active .x { color: #5a5a5a; }
.newtab { border-left: 1px solid #77756e; height: 22px; padding: 3px 0 0 9px; }
.navbar { height: 41px; flex: none; background: linear-gradient(#f8f8f7, #f0efee); border-bottom: 1px solid #a6a59f; display: flex; align-items: center; padding-left: 4px; font: 14px "Noto Sans", "Open Sans", sans-serif; color: #999; }
.back { width: 32px; height: 32px; border-radius: 50%; background: #fafafa; border: 1px solid #9aa4ae; display: flex; align-items: center; justify-content: center; position: relative; z-index: 1; margin-right: -5px; flex: none; }
.urlbar { width: 1186px; height: 24px; background: #fff; border: 1px solid #aaaba2; border-radius: 2px; display: flex; align-items: center; padding-left: 8px; flex: none; }
.url { margin-left: 3px; letter-spacing: .3px; }
.url b { font-weight: normal; color: #333; }
.dd { margin-left: auto; }
.urlbar i { width: 1px; height: 16px; background: #ccc; margin: 0 8px 0 6px; }
.reload { margin-right: 11px; }
.searchbar { width: 344px; height: 24px; margin-left: 7px; background: #fff; border: 1px solid #aaaba2; border-radius: 2px; display: flex; align-items: center; padding-left: 5px; gap: 2px; flex: none; letter-spacing: .1px; }
.tools { display: flex; align-items: center; margin-left: 13px; gap: 20px; }
.tools svg { width: 18px; height: 18px; }
.tools i { width: 1px; height: 18px; background: #c8ccd0; margin: 0 -14px; flex: none; }
.tools i.tall { height: 36px; background: #dedddb; margin: 0 -8px 0 -6px; }
.viewport { flex: 1; display: flex; min-height: 0; }
.page { flex: 1; background: #fff; display: flex; flex-direction: column; position: relative; overflow: hidden; }

/* jenkins header */
.jhead { height: 40px; flex: none; background: #000; display: flex; align-items: center; padding: 0 43px 0 18px; }
.jface { width: 33px; height: 36px; align-self: flex-end; margin-left: 1px; }
.jname { font: bold 27px/38px "DejaVu Serif", serif; font-stretch: condensed; color: #fff; margin-left: 4px; letter-spacing: 1.8px; }
.jsearch { margin-left: auto; width: 255px; height: 24px; background: #fff; border-radius: 3px; box-shadow: inset 0 1px 3px #999; display: flex; align-items: center; padding-left: 3px; gap: 1px; color: #999; margin-bottom: 3px; }
.help { width: 15px; height: 15px; border-radius: 50%; background: #3f68a8; border: 1px solid #cfdcf0; color: #fff; font: bold 11px/13px "Liberation Sans", sans-serif; text-align: center; margin: 0 0 2px 5px; }
.crumbs { height: 26px; flex: none; background: #f6faf2; border-bottom: 1px solid #d3d7cf; display: flex; align-items: center; padding: 1px 26px 0 18px; color: #4d545d; }
.crumbs svg { margin: 0 16px 0 22px; }
.c2 { letter-spacing: .15px; }
.refresh { margin-left: auto; font-size: 9.5px; padding-bottom: 2px; }
.columns { display: flex; flex: 1; min-height: 0; }

/* side panel */
.side { width: 376px; flex: none; padding: 12px 0 0 15px; }
.tasks li { height: 32px; display: flex; align-items: center; gap: 6px; padding-left: 2px; font-size: 14px; color: #204a87; }
.tasks svg { width: 24px; height: 24px; }
.tasks .v { color: #5c3566; letter-spacing: .05px; }
.tasks .cur { font-weight: bold; letter-spacing: .2px; }
.del { letter-spacing: .13px; }
.history { width: 330px; height: 600px; margin-top: 19px; border: 1px solid #bbb; border-radius: 4px 4px 0 0; }
.hhead { height: 35px; background: #ededed; display: flex; align-items: center; padding-left: 15px; }
.hhead > svg { margin-top: 2px; }
.hhead b { margin: 0 0 2px 12px; }
.hhead a { margin: 0 0 2px auto; font-weight: bold; }
.hhead i { width: 12px; height: 5px; border: 1px solid #3465a4; background: #a9c5ea; margin: 2px 26px 0 5px; border-radius: 1px; }
.find { width: 306px; height: 23px; margin: 11px 0 9px 11px; border: 1px solid #999; border-radius: 4px; display: flex; align-items: center; justify-content: space-between; padding: 0 5px 0 6px; color: #999; }
.fx { font-size: 12px; }
.builds li { height: 31px; display: flex; align-items: flex-start; padding: 5px 0 0 8px; font-size: 12px; line-height: 15px; color: #555; letter-spacing: .08px; }
.builds li:nth-child(odd) { background: #fbfbfb; }
.builds svg { width: 13px; height: 14px; margin-right: 5px; }
.builds a { width: 60px; color: #000; font-weight: bold; font-size: 12.5px; }

/* main panel */
.main { flex: 1; padding: 34px 15px 0 0; }
h1 { font-size: 26px; line-height: 30px; letter-spacing: -.2px; margin-left: -1px; }
.split { display: flex; justify-content: space-between; }
.left { padding-top: 91px; }
.prow { height: 52px; display: flex; align-items: center; padding-left: 15px; gap: 4px; }
.prow svg { width: 48px; height: 48px; }
.test a { letter-spacing: .2px; }
.test span { letter-spacing: .06px; }
.gap { margin-top: 15px; }
h2 { font-size: 19.5px; line-height: 24px; margin: 19px 0 17px -1px; }
.links { padding-left: 39px; line-height: 17px; letter-spacing: .08px; }
.links li { display: flex; align-items: center; }
.links li::before { content: ""; width: 5px; height: 5px; border-radius: 50%; background: #333; margin: 0 7px 0 -12px; }
.right { width: 500px; padding-top: 20px; }
.adddesc { display: flex; justify-content: flex-end; height: 17px; line-height: 17px; }
.adddesc svg { margin-top: 2px; }
.disable { display: block; width: 135px; height: 34px; margin: 6px 2px 2px auto; padding: 0; border: 1px solid #5788a1; background: #4b758b; color: #eee; font: bold 12px "Liberation Sans", sans-serif; }
.ctitle { font-size: 16px; font-weight: bold; line-height: 18px; text-align: center; }
.ylab { font: 10px "DejaVu Sans", sans-serif; text-anchor: end; fill: #000; }
.xlab { font: 10px "DejaVu Sans", sans-serif; text-anchor: end; fill: #000; }
.count { font: 12px "DejaVu Sans", sans-serif; text-anchor: middle; fill: #000; }
.clinks { display: flex; justify-content: flex-end; gap: 4px; line-height: 17px; margin-top: 1px; }
.clinks a:last-child { letter-spacing: -.15px; }
.status { position: absolute; left: 0; bottom: 0; width: 326px; height: 22px; border: 1px solid #b5b5b5; border-left: 0; border-bottom: 0; border-radius: 0 4px 0 0; background: linear-gradient(#fdfdfd, #e2e2e2); font: 14px/21px "Noto Sans", sans-serif; letter-spacing: .3px; white-space: nowrap; color: #333; padding-left: 4px; }

/* scrollbar */
.scroll { width: 13px; flex: none; background: #f3f2f1; border-left: 1px solid #b0aeac; border-right: 1px solid #b0aeac; display: flex; flex-direction: column; align-items: center; }
.up { margin: 5px 0 3px; }
.thumb { width: 13px; height: 476px; flex: none; border: 1px solid #96938f; border-radius: 6px; background: linear-gradient(90deg, #fff, #e6e4e2); display: flex; flex-direction: column; align-items: center; justify-content: center; gap: 2px; position: relative; z-index: 1; }
.thumb i { width: 5px; height: 1px; background: #a3a09c; }
.rest { flex: 1; width: 100%; background: #dcdad8; border-radius: 0 0 5px 5px; border-bottom: 1px solid #a3a09c; margin-top: -6px; }
.down { margin: 4px 0 5px; }

/* virtual machine status bar */
.vbstatus { flex: 1; background: #f0f0f0; display: flex; align-items: center; justify-content: flex-end; font: 12px "Open Sans", "Noto Sans", sans-serif; color: #000; gap: 5px; padding-right: 3px; }
.vbstatus svg:not(.grip) { width: 16px; height: 16px; }
.rc { font-size: 11px; letter-spacing: -.35px; }
.grip { align-self: flex-end; margin-left: 4px; }

/* taskbar */
.taskbar { height: 40px; flex: none; display: flex; align-items: center; background: linear-gradient(24.7deg, transparent 47px, #c0922c 51px, #c49c38 80px) 1700px 0 / 220px 40px no-repeat, linear-gradient(90deg, #bc9244, #b98a3a 85px, #b57c24 100px, #b8852a 540px, #b47a28 780px, #b37330 933px, #9d8040 935px, #a08040 1067px, #c0a878 1069px, #bda674 1800px); border-top: 1px solid #9c7230; }
.slot { width: 60px; height: 38px; margin-right: 2px; display: flex; align-items: center; justify-content: center; flex: none; }
.slot:first-child { width: 49px; }
.task { border: 1px solid #e2c48c; background: rgba(222,184,120,.5); box-shadow: 0 0 0 1px rgba(110,75,20,.5); }
.s2 { padding-right: 9px; background: linear-gradient(90deg, transparent 50px, #8f6a2c 50px 51px, #e2c48c 51px 52px, transparent 52px 54px, #8f6a2c 54px 55px, #e2c48c 55px 56px, transparent 56px), rgba(222,184,120,.5); }
.s1 { padding-right: 7px; background: linear-gradient(90deg, transparent 54px, #8f6a2c 54px 55px, #e2c48c 55px 56px, transparent 56px), rgba(222,184,120,.5); }
.jee { font: 11px "Liberation Sans", sans-serif; fill: #ff9a2a; }
.tray { margin-left: auto; display: flex; align-items: center; font: 12px/17px "Open Sans", "Noto Sans", sans-serif; color: #fff; padding-right: 19px; }
.spk { margin-left: 13px; }
.flg { margin-left: 8px; }
.net { margin-left: 8px; }
.pol { margin-left: 16px; letter-spacing: -.6px; }
.time { display: flex; flex-direction: column; align-items: center; margin-left: 18px; letter-spacing: -.45px; }
.hm { letter-spacing: -.8px; }
```
